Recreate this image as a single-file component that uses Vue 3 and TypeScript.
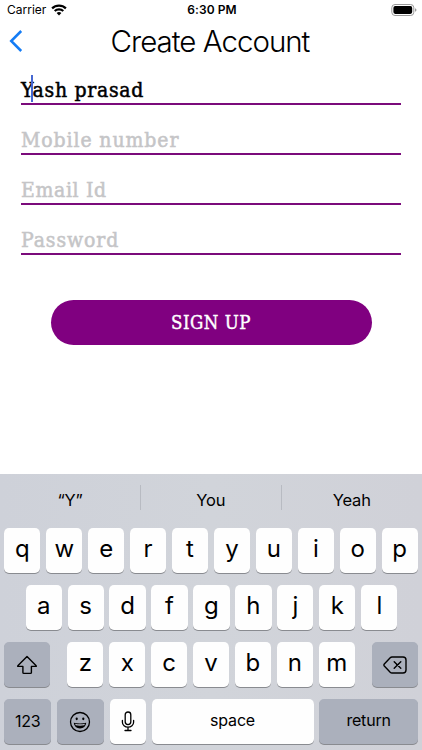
<script setup lang="ts">
import { ref } from 'vue'

interface Field {
  id: string
  label: string
  value: string
}

const fields = ref<Field[]>([
  { id: 'name', label: 'Full name', value: 'Yash prasad' },
  { id: 'mobile', label: 'Mobile number', value: '' },
  { id: 'email', label: 'Email Id', value: '' },
  { id: 'password', label: 'Password', value: '' },
])

const suggestions: string[] = ['“Y”', 'You', 'Yeah']
const topRow: string[] = [...'qwertyuiop']
const homeRow: string[] = [...'asdfghjkl']
const bottomRow: string[] = [...'zxcvbnm']
</script>

<template>
  <main class="screen">
    <div class="status">
      <div class="carrier">
        <span>Carrier</span>
        <svg width="16" height="12" viewBox="0 0 16 12" fill="none" stroke="#000">
          <path d="M1.1 4.4a9.9 9.9 0 0 1 13.8 0" stroke-width="2.2" />
          <path d="M3.7 7.1a6.1 6.1 0 0 1 8.6 0" stroke-width="2.1" />
          <path d="M8 11.5 5.6 9.1a3.4 3.4 0 0 1 4.8 0z" fill="#000" stroke="none" />
        </svg>
      </div>
      <span class="time">6:30 PM</span>
      <svg class="battery" width="26" height="12" viewBox="0 0 26 12">
        <rect x=".8" y=".5" width="22" height="11" rx="3.2" fill="none" stroke="#999" />
        <rect x="2.4" y="2.1" width="18.8" height="7.8" rx="1.8" />
        <path d="M24 4.2q1.5.5 1.5 1.8T24 7.8z" fill="#999" />
      </svg>
    </div>

    <header class="nav">
      <button class="back" aria-label="Back">
        <svg width="14" height="24" viewBox="0 0 14 24" fill="none" stroke="#147cf5" stroke-width="2.5">
          <path d="M12.2 2 2.2 12l10 10" />
        </svg>
      </button>
      <h1>Create Account</h1>
    </header>

    <form class="form" @submit.prevent>
      <div v-for="field in fields" :key="field.id" class="field" :class="[field.id, { filled: field.value }]">
        <span>{{ field.value || field.label }}</span>
        <i v-if="field.id === 'name'" class="caret"></i>
      </div>
      <button class="submit" type="submit"><span>SIGN UP</span></button>
    </form>

    <section class="keyboard">
      <div class="suggestions">
        <span v-for="word in suggestions" :key="word">{{ word }}</span>
      </div>
      <div class="row">
        <div v-for="k in topRow" :key="k" class="key"><span>{{ k }}</span></div>
      </div>
      <div class="row home">
        <div v-for="k in homeRow" :key="k" class="key"><span>{{ k }}</span></div>
      </div>
      <div class="row bottom">
        <div class="key dark side">
          <svg width="22" height="20" viewBox="0 0 22 20" fill="none" stroke="#000" stroke-width="1.4" stroke-linejoin="round">
            <path d="M11 1.5 20.2 10.8q.4.6-.4.6H15.4v6q0 1-1 1H7.9q-1 0-1-1v-6H2.2q-.8 0-.4-.6z" />
          </svg>
        </div>
        <div class="letters">
          <div v-for="k in bottomRow" :key="k" class="key"><span>{{ k }}</span></div>
        </div>
        <div class="key dark side">
          <svg width="24" height="18" viewBox="0 0 24 18" fill="none" stroke="#000" stroke-width="1.4" stroke-linejoin="round" stroke-linecap="round">
            <path d="M9 1H20a3 3 0 0 1 3 3v10a3 3 0 0 1-3 3H9q-1 0-1.8-.8L1.3 10q-.8-1 0-2L7.2 1.8Q8 1 9 1z" />
            <path d="m11.2 5.7 6.6 6.6m0-6.6-6.6 6.6" />
          </svg>
        </div>
      </div>
      <div class="row controls">
        <div class="key dark num"><span>123</span></div>
        <div class="key dark emoji">
          <svg width="22" height="22" viewBox="0 0 22 22">
            <circle cx="11" cy="11" r="9.5" fill="none" stroke="#000" stroke-width="1.3" />
            <ellipse cx="7.7" cy="7.8" rx="1.1" ry="1.4" />
            <ellipse cx="14.3" cy="7.8" rx="1.1" ry="1.4" />
            <path d="M4.7 11.7q6.3 1.5 12.6 0-.9 5.7-6.3 5.7t-6.3-5.7z" />
            <path d="M6 12.8q5 1 10 0l-.7 1.5q-4.3.8-8.6 0z" fill="#b8bbc5" />
          </svg>
        </div>
        <div class="key mic">
          <svg width="14" height="21" viewBox="0 0 14 21" fill="none" stroke="#000" stroke-width="1.3" stroke-linecap="round">
            <rect x="4.2" y="1" width="5.6" height="12.6" rx="2.8" />
            <path d="M1.4 9.5v1.7a5.6 5 0 0 0 11.2 0V9.5M7 16.2v3.1M4 19.5h6" />
          </svg>
        </div>
        <div class="key space"><span>space</span></div>
        <div class="key dark return"><span>return</span></div>
      </div>
    </section>
  </main>
</template>

<style>
body {
  margin: 0;
  background: #fff;
}
</style>

<style scoped>
.screen {
  width: 422px;
  height: 750px;
  display: flex;
  flex-direction: column;
  overflow: hidden;
  background: #fff;
  color: #000;
  font-family: Inter, "Liberation Sans", sans-serif;
}

.status {
  height: 20px;
  box-sizing: border-box;
  padding: 0 5px 0 7px;
  display: grid;
  grid-template-columns: 1fr auto 1fr;
  align-items: center;
  font-size: 12px;
  line-height: 20px;
}

.carrier {
  display: flex;
  align-items: center;
  gap: 5px;
}

.time {
  font-weight: 600;
  letter-spacing: 0.1px;
}

.battery {
  justify-self: end;
}

.nav {
  height: 44px;
  display: grid;
  grid-template-columns: 40px 1fr 40px;
  align-items: center;
  padding-bottom: 3px;
  box-sizing: border-box;
}

.nav h1 {
  margin: 0;
  text-align: center;
  font-size: 29.5px;
  line-height: 40px;
  font-weight: 300;
  white-space: nowrap;
  letter-spacing: -1px;
  padding-right: 2px;
}

.back {
  border: 0;
  padding: 0 0 0 9px;
  background: none;
  display: flex;
}

.form {
  padding: 5px 21px 0;
  display: flex;
  flex-direction: column;
  flex: 1;
}

.field {
  position: relative;
  height: 50px;
  box-sizing: border-box;
  border-bottom: 2px solid #7b0b7b;
  display: flex;
  align-items: end;
  font-family: "DejaVu Serif Condensed", "DejaVu Serif", serif;
  font-stretch: condensed;
  font-size: 21px;
  font-weight: 400;
  letter-spacing: 0.9px;
  -webkit-text-stroke: 0.5px currentColor;
  line-height: 25px;
  white-space: nowrap;
  color: #c5c5c7;
}

.field:first-child {
  height: 36px;
}

.filled {
  color: #000;
  letter-spacing: 0.7px;
}

.email {
  letter-spacing: 0.65px;
}

.caret {
  position: absolute;
  left: 10px;
  bottom: 1px;
  width: 2px;
  height: 27px;
  background: #4668d2;
}

.submit {
  margin: 44.5px 29.5px 0;
  height: 45.5px;
  border: 0;
  border-radius: 23px;
  background: #800080;
  color: #fff;
  font: 400 18.5px/44px "DejaVu Serif Condensed", "DejaVu Serif", serif;
  font-stretch: condensed;
  letter-spacing: 0.5px;
  -webkit-text-stroke: 0.4px #fff;
}

.keyboard {
  height: 276px;
  box-sizing: border-box;
  padding: 0 4.2px;
  background: linear-gradient(90deg, #ced1d9, #d1d4da 50%, #d0d1d8);
}

.suggestions {
  height: 53.6px;
  margin: 0 -4.2px;
  display: grid;
  grid-template-columns: 140px 140.5px 1fr;
  align-items: start;
  padding-top: 11px;
  box-sizing: border-box;
  font-size: 16.5px;
  letter-spacing: -0.2px;
  line-height: 30px;
  text-align: center;
}

.suggestions span {
  height: 25px;
}

.suggestions span + span {
  border-left: 1px solid #b8bbc2;
}

.row {
  display: flex;
  gap: 5.8px;
  margin-bottom: 11.5px;
}

.home {
  padding: 0 20.5px 0 21.4px;
}

.bottom {
  justify-content: space-between;
}

.letters {
  display: flex;
  gap: 5.8px;
  width: 287.5px;
}

.key {
  flex: 1;
  height: 45.6px;
  border-radius: 5px;
  background: #fefefe;
  box-shadow: 0 1px 0 #898b90;
  display: flex;
  align-items: center;
  justify-content: center;
  font-size: 24px;
  line-height: 40px;
}

.key > span {
  padding-bottom: 3px;
}

.dark {
  background: #abb0bc;
}

.side {
  flex: 0 0 46px;
}

.controls .key {
  font-size: 16px;
  letter-spacing: -0.2px;
}

.controls .num > span {
  padding-bottom: 1px;
}

.controls .num,
.controls .emoji {
  flex: 0 0 47px;
}

.controls .mic {
  flex: 0 0 36px;
}

.controls .return {
  flex: 0 0 98.5px;
}
</style>
